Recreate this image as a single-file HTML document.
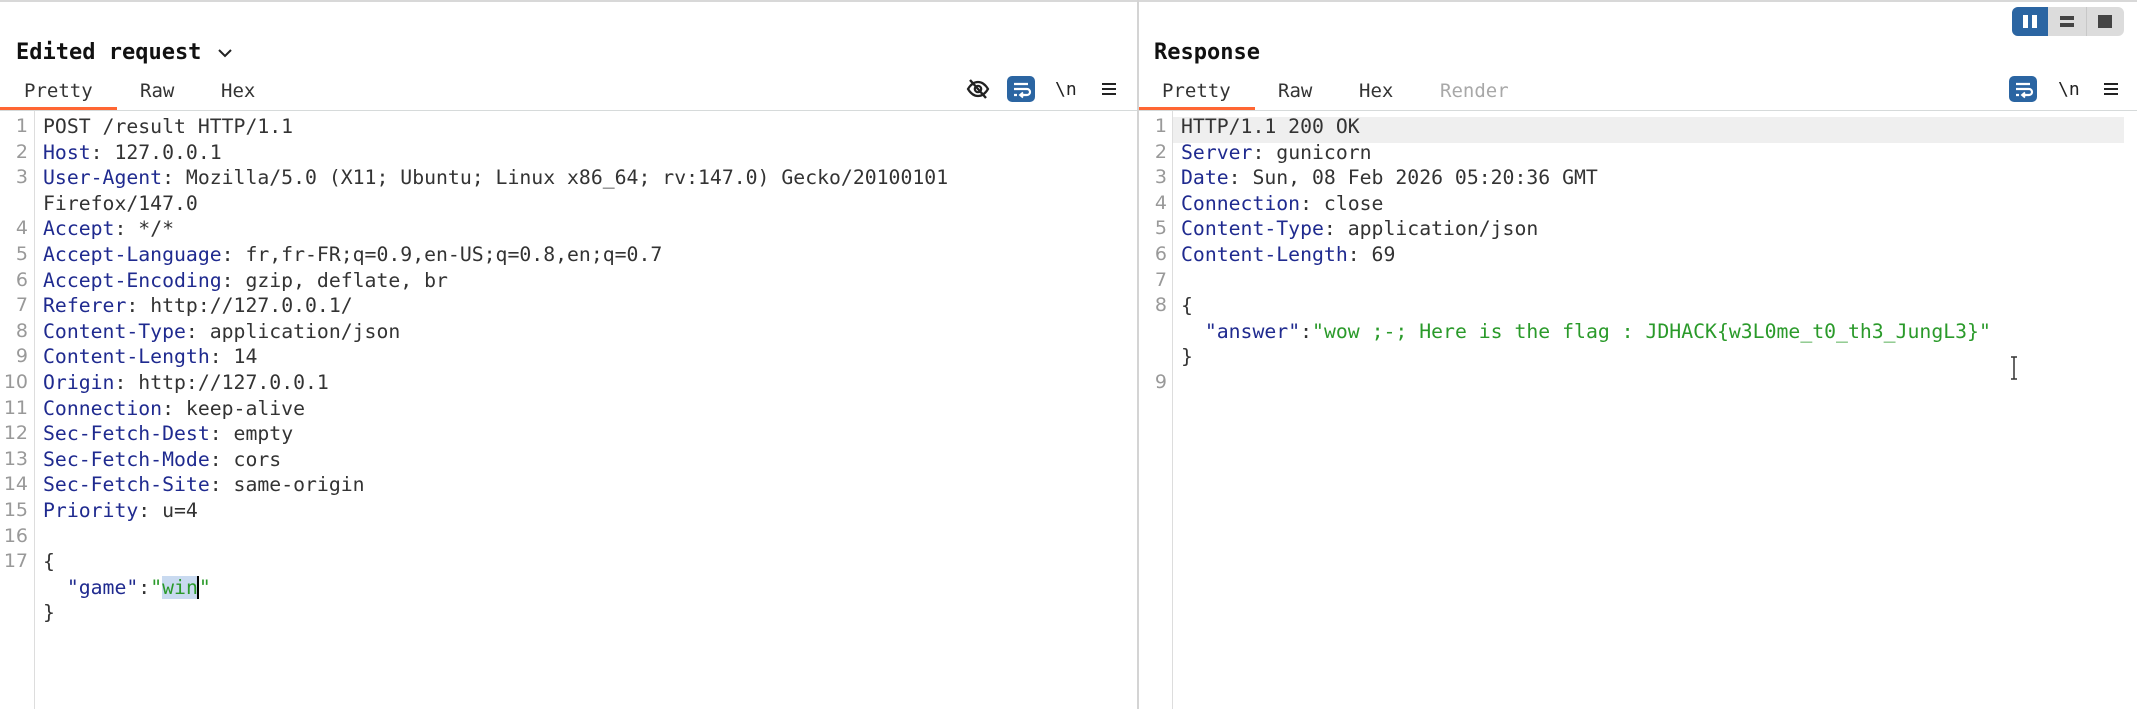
<!DOCTYPE html>
<html><head><meta charset="utf-8"><style>
*{margin:0;padding:0;box-sizing:border-box}
body{width:2137px;height:709px;background:#fff;position:relative;overflow:hidden;font-family:"DejaVu Sans Mono","Liberation Mono",monospace;color:#222}
.abs{position:absolute}
.title{font-weight:bold;font-size:22px;line-height:26px;top:40px;white-space:pre;color:#111}
.tab{font-size:19px;line-height:22px;top:80px;color:#333;white-space:pre}
.ul{height:3px;background:#ff6633;top:107px}
.sep{height:1px;background:#d6dada;top:110px}
.code{font-size:19.8px;line-height:25.6px;top:114px;white-space:pre;color:#333}
.num{font-family:"DejaVu Sans",sans-serif;font-size:19px;line-height:25.6px;top:114px;color:#999;text-align:right;white-space:pre}
.k{color:#1f2a8f}.g{color:#2a9a2a}
.gut{width:1px;background:#ddd;top:111px;bottom:0}
.btn{width:28px;height:26px;border-radius:5px;background:#2b65a2;top:76px}
.nl{font-size:18px;top:79px;line-height:22px;color:#222}
</style></head><body>
<div class="abs" style="left:0;right:0;top:0;height:2px;background:#d8d8d8"></div>
<div class="abs" style="left:1137px;top:0;bottom:0;width:2px;background:#d4d4d4"></div>

<!-- left -->
<div class="abs title" style="left:16px">Edited request</div>
<svg class="abs" style="left:216px;top:46px" width="18" height="14" viewBox="0 0 18 14"><path d="M3 4l6 6 6-6" stroke="#222" stroke-width="2" fill="none"/></svg>
<div class="abs tab" style="left:24px">Pretty</div>
<div class="abs tab" style="left:140px">Raw</div>
<div class="abs tab" style="left:221px">Hex</div>
<div class="abs ul" style="left:0;width:117px"></div>
<div class="abs sep" style="left:0;width:1137px"></div>
<svg class="abs" style="left:965px;top:77px" width="26" height="24" viewBox="0 0 26 24"><path d="M3 12c3-5 6.5-7 10-7s7 2 10 7c-3 5-6.5 7-10 7s-7-2-10-7z" stroke="#222" stroke-width="2.2" fill="none"/><circle cx="13" cy="12" r="3.2" stroke="#222" stroke-width="2.2" fill="none"/><path d="M5 3l16 18" stroke="#222" stroke-width="2.4"/></svg>
<div class="abs btn" style="left:1007px"></div>
<svg class="abs" style="left:1007px;top:76px" width="28" height="26" viewBox="0 0 28 26"><path d="M7 8h14M7 13h13a3 3 0 010 6h-6M7 19h3" stroke="#fff" stroke-width="2.2" fill="none"/><path d="M16 16.5l-3 2.5 3 2.5" stroke="#fff" stroke-width="1.8" fill="none"/></svg>
<div class="abs nl" style="left:1055px">\n</div>
<svg class="abs" style="left:1100px;top:80px" width="18" height="18" viewBox="0 0 18 18"><path d="M2 4h14M2 9h14M2 14h14" stroke="#222" stroke-width="2"/></svg>
<div class="abs gut" style="left:34px"></div>
<div class="abs num" style="left:0;width:28px">1
2
3

4
5
6
7
8
9
10
11
12
13
14
15
16
17</div>
<div class="abs code" style="left:43px">POST /result HTTP/1.1
<span class="k">Host</span>: 127.0.0.1
<span class="k">User-Agent</span>: Mozilla/5.0 (X11; Ubuntu; Linux x86_64; rv:147.0) Gecko/20100101
Firefox/147.0
<span class="k">Accept</span>: */*
<span class="k">Accept-Language</span>: fr,fr-FR;q=0.9,en-US;q=0.8,en;q=0.7
<span class="k">Accept-Encoding</span>: gzip, deflate, br
<span class="k">Referer</span>: http://127.0.0.1/
<span class="k">Content-Type</span>: application/json
<span class="k">Content-Length</span>: 14
<span class="k">Origin</span>: http://127.0.0.1
<span class="k">Connection</span>: keep-alive
<span class="k">Sec-Fetch-Dest</span>: empty
<span class="k">Sec-Fetch-Mode</span>: cors
<span class="k">Sec-Fetch-Site</span>: same-origin
<span class="k">Priority</span>: u=4

{
  <span class="k">"game"</span>:<span class="g">"<span style="background:#c9daf0">win</span><span style="border-left:2px solid #000;margin-left:-1px"></span>"</span>
}</div>

<!-- right -->
<div class="abs" style="left:2012px;top:7px;width:112px;height:29px;border-radius:6px;background:#dcdcdc;overflow:hidden">
<div class="abs" style="left:0;top:0;width:36px;height:29px;background:#2b65a2"></div>
<div class="abs" style="left:74px;top:0;width:1px;height:29px;background:#c8c8c8"></div>
<div class="abs" style="left:11px;top:8px;width:5px;height:13px;background:#fff"></div>
<div class="abs" style="left:20px;top:8px;width:5px;height:13px;background:#fff"></div>
<div class="abs" style="left:48px;top:9px;width:14px;height:4px;background:#444"></div>
<div class="abs" style="left:48px;top:16px;width:14px;height:4px;background:#444"></div>
<div class="abs" style="left:86px;top:8px;width:14px;height:13px;background:#444"></div>
</div>
<div class="abs title" style="left:1154px">Response</div>
<div class="abs tab" style="left:1162px">Pretty</div>
<div class="abs tab" style="left:1278px">Raw</div>
<div class="abs tab" style="left:1359px">Hex</div>
<div class="abs tab" style="left:1440px;color:#a8a8a8">Render</div>
<div class="abs ul" style="left:1139px;width:116px"></div>
<div class="abs sep" style="left:1139px;right:0"></div>
<div class="abs btn" style="left:2009px"></div>
<svg class="abs" style="left:2009px;top:76px" width="28" height="26" viewBox="0 0 28 26"><path d="M7 8h14M7 13h13a3 3 0 010 6h-6M7 19h3" stroke="#fff" stroke-width="2.2" fill="none"/><path d="M16 16.5l-3 2.5 3 2.5" stroke="#fff" stroke-width="1.8" fill="none"/></svg>
<div class="abs nl" style="left:2058px">\n</div>
<svg class="abs" style="left:2102px;top:80px" width="18" height="18" viewBox="0 0 18 18"><path d="M2 4h14M2 9h14M2 14h14" stroke="#222" stroke-width="2"/></svg>
<div class="abs" style="left:1173px;top:117px;width:951px;height:26px;background:#efefef"></div>
<div class="abs gut" style="left:1172px"></div>
<div class="abs num" style="left:1139px;width:28px">1
2
3
4
5
6
7
8


9</div>
<div class="abs code" style="left:1181px">HTTP/1.1 200 OK
<span class="k">Server</span>: gunicorn
<span class="k">Date</span>: Sun, 08 Feb 2026 05:20:36 GMT
<span class="k">Connection</span>: close
<span class="k">Content-Type</span>: application/json
<span class="k">Content-Length</span>: 69

{
  <span class="k">"answer"</span>:<span class="g">"wow ;-; Here is the flag : JDHACK{w3L0me_t0_th3_JungL3}"</span>
}
</div>
<svg class="abs" style="left:2009px;top:356px" width="10" height="24" viewBox="0 0 10 24"><path d="M2 1h6M5 1v22M2 23h6" stroke="#333" stroke-width="1.5" fill="none"/></svg>
</body></html>
